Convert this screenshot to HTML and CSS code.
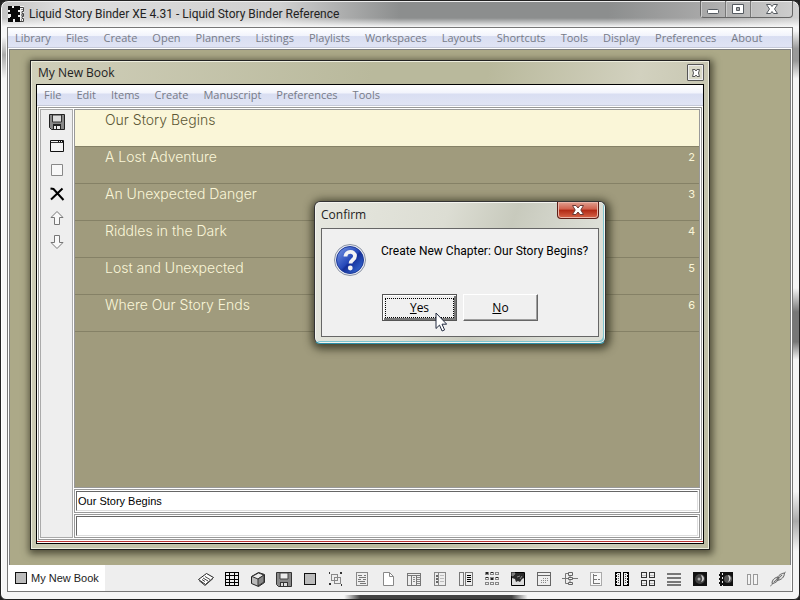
FILE: index.html
```html
<!DOCTYPE html>
<html lang="en">
<head>
<meta charset="utf-8">
<title>Liquid Story Binder XE 4.31</title>
<link rel="stylesheet" href="styles.css">
</head>
<body>
<div class="app">
  <header class="app-title">
    <svg class="icon" viewBox="0 0 16 16"><rect width="16" height="16" fill="#f2f2f2"/><path d="M0 0h4v2h2V0h6v4h-2v2h2v3h-2v2h2v5H7v-3H5v3H0v-4h2v-1h1V8H0V6h2V4H0z" fill="#0a0a0a"/><path d="M12 1.500h3.500v4H14v2h1.500v3H14v2h1.500v3H12" fill="none" stroke="#444"/><path d="M13 3h2v1h-2zM13 8h2v2h-2zM13 13h1v2h-1z" fill="#888"/></svg>
    <h1>Liquid Story Binder XE 4.31 - Liquid Story Binder Reference</h1>
    <div class="caption">
      <button aria-label="Minimize"><svg viewBox="0 0 16 16"><rect x="2.500" y="8.500" width="11" height="4" rx="1" fill="#fff" stroke="#555a60"/></svg></button>
      <button aria-label="Maximize"><svg viewBox="0 0 16 16"><path d="M2.500 3.500h11v9h-11z" fill="#fff" stroke="#555a60"/><path d="M6.500 6.500h3v3h-3z" fill="#aaa" stroke="#555a60"/></svg></button>
      <button class="wide" aria-label="Close"><svg viewBox="0 0 16 16"><path d="M2.500 3.500h4L8 5.500l1.500-2h4L10.500 8l3 4.500h-4l-1.500-2-1.500 2h-4L5.500 8z" fill="#fff" stroke="#555a60"/></svg></button>
    </div>
  </header>
  <div class="client">
    <nav class="menu">
      <a href="#">Library</a><a href="#">Files</a><a href="#">Create</a><a href="#">Open</a><a href="#">Planners</a><a href="#">Listings</a><a href="#">Playlists</a><a href="#">Workspaces</a><a href="#">Layouts</a><a href="#">Shortcuts</a><a href="#">Tools</a><a href="#">Display</a><a href="#">Preferences</a><a href="#">About</a>
    </nav>
    <main class="desktop">
      <section class="book">
        <header class="book-title">
          <h2>My New Book</h2>
          <button class="book-close" aria-label="Close book"><svg viewBox="0 0 10 10"><path d="M1.500 1.500h2.500L5 3l1-1.500h2.500L7.500 5l1 3.500H6L5 7 4 8.500H1.500l1-3.500z" fill="#fff" stroke="#555"/></svg></button>
        </header>
        <div class="book-body">
          <nav class="menu book-menu">
            <a href="#">File</a><a href="#">Edit</a><a href="#">Items</a><a href="#">Create</a><a href="#">Manuscript</a><a href="#">Preferences</a><a href="#">Tools</a>
          </nav>
          <div class="panes">
            <div class="tools">
              <button aria-label="Save"><svg class="icon" viewBox="0 0 16 16"><path d="M.500.500h15v15H2.500l-2-2z" fill="#888" stroke="#222"/><path d="M3.500 1h9v7h-9z" fill="#ddd" stroke="#333"/><path d="M4 10h8v6H4z" fill="#222"/><path d="M5 12h2v3H5zM8 12h3v3H8z" fill="#eee"/></svg></button>
              <button aria-label="Window"><svg class="icon" viewBox="0 0 16 16"><path d="M1.500 2.500h13v11h-13z" fill="#f4f4f4" stroke="#111"/><path d="M2 4.500h12" stroke="#333"/><path d="M9 3.500h5" stroke="#111" stroke-dasharray="1 1"/></svg></button>
              <button aria-label="Blank"><svg class="icon" viewBox="0 0 16 16"><path d="M2.500 2.500h11v11h-11z" fill="#f8f8f8" stroke="#888"/></svg></button>
              <button aria-label="Delete"><svg class="icon" viewBox="0 0 16 16"><path d="M1.500 2.500l3 .5 10 11M13.500 2.500L2 13.500" fill="none" stroke="#000" stroke-width="2"/></svg></button>
              <button aria-label="Move up"><svg class="icon" viewBox="0 0 16 16"><path d="M8 1.500l6 6h-3.500v7h-5v-7H2z" fill="#f8f8f8" stroke="#777"/></svg></button>
              <button aria-label="Move down"><svg class="icon" viewBox="0 0 16 16"><path d="M8 14.500l6-6h-3.500v-7h-5v7H2z" fill="#f8f8f8" stroke="#777"/></svg></button>
            </div>
            <div class="work">
              <ol class="chapters">
                <li class="current"><span>Our Story Begins</span></li>
                <li><span>A Lost Adventure</span><small>2</small></li>
                <li><span>An Unexpected Danger</span><small>3</small></li>
                <li><span>Riddles in the Dark</span><small>4</small></li>
                <li><span>Lost and Unexpected</span><small>5</small></li>
                <li><span>Where Our Story Ends</span><small>6</small></li>
              </ol>
              <div class="field"><input type="text" aria-label="Chapter title" value="Our Story Begins"></div>
              <div class="field"><input type="text" aria-label="Chapter note"></div>
            </div>
          </div>
        </div>
      </section>
      <section class="dialog" role="dialog" aria-labelledby="confirm-title">
        <header class="dialog-title">
          <h2 id="confirm-title">Confirm</h2>
          <button class="dialog-close" aria-label="Close dialog"><svg viewBox="0 0 14 12"><path d="M1.500 1.500h3.500L7 4l2-2.500h3.500L9.800 6l2.700 4.500H9L7 8l-2 2.500H1.500L4.200 6z" fill="#fff" stroke="#6b3a35"/></svg></button>
        </header>
        <div class="dialog-body">
          <svg class="question" viewBox="0 0 34 34"><defs><linearGradient id="ball" x1="0" y1="0" x2="1" y2="1"><stop offset="0" stop-color="#7c9be8"/><stop offset=".5" stop-color="#2548b8"/><stop offset=".55" stop-color="#142f98"/><stop offset="1" stop-color="#3f78e0"/></linearGradient></defs><circle cx="17" cy="17" r="15.500" fill="#e8ebf2" stroke="#8b93a5"/><circle cx="17" cy="17" r="13.500" fill="url(#ball)" stroke="#1d3a9a"/><path d="M12.500 13.500C12.500 7.500 22 7.500 22 13c0 4-4.500 4-4.500 7.500" fill="none" stroke="#f4f4f4" stroke-width="3.800"/><circle cx="17.300" cy="25" r="2.400" fill="#f4f4f4"/></svg>
          <p>Create New Chapter: Our Story Begins?</p>
          <div class="answers">
            <button class="answer default"><span><u>Y</u>es</span></button>
            <button class="answer"><span><u>N</u>o</span></button>
          </div>
        </div>
        <svg class="pointer" viewBox="0 0 12 20"><path d="M1 1v15.500l3.500-3.400 2.600 5.900 2.500-1.100L7 12.200h4.700z" fill="#fff" stroke="#222b40"/></svg>
      </section>
    </main>
    <footer class="taskbar">
      <button class="task"><i></i>My New Book</button>
      <div class="launch">
        <button aria-label="Notes"><svg class="icon" viewBox="0 0 16 16"><path d="M.500 8.500l8-6 7 4-8 7z" fill="#fff" stroke="#222"/><path d="M1 9.500l6 5 8-7M5 7l5 3M7 5.500l5 3M4 8.500l3 2" fill="none" stroke="#444"/></svg></button>
        <button aria-label="Grid"><svg class="icon crisp" viewBox="0 0 16 16"><path d="M2 2h12v12H2z" fill="#eee"/><path d="M1.500 1.500h13v13h-13zM5.500 1v14M10.500 1v14M1 4.500h14M1 8.500h14M1 11.500h14" fill="none" stroke="#000"/></svg></button>
        <button aria-label="Box"><svg class="icon" viewBox="0 0 16 16"><path d="M1.500 5.500l7-4 6 2v8l-6 4-7-3z" fill="#bbb" stroke="#222"/><path d="M2 5.500l6 2.500 6-4-5.500-2z" fill="#eee" stroke="#333"/><path d="M8 8v7l6-4V4z" fill="#888" stroke="#333"/></svg></button>
        <button aria-label="Save all"><svg class="icon" viewBox="0 0 16 16"><path d="M.500 1.500h15v14H2.500l-2-2z" fill="#888" stroke="#333"/><path d="M4 2h8v6H4z" fill="#eee" stroke="#444"/><path d="M4 11h8v5H4z" fill="#333"/><path d="M5 12h2v3H5zM8 12h3v3H8z" fill="#ddd"/></svg></button>
        <button aria-label="Panel"><svg class="icon crisp" viewBox="0 0 16 16"><path d="M2.500 2.500h11v11h-11z" fill="#bbb" stroke="#111"/></svg></button>
        <button aria-label="Group"><svg class="icon crisp" viewBox="0 0 16 16"><path d="M3.500 3.500h6v6h-6zM6.500 6.500h6v6h-6z" fill="none" stroke="#888"/><path d="M1 1h1v2H1zM12 1h2v2h-2zM1 12h2v2H1zM13 13h1v2h-1z" fill="#333"/></svg></button>
        <button aria-label="Document"><svg class="icon crisp" viewBox="0 0 16 16"><path d="M2.500 1.500h11v13h-11z" fill="#eee" stroke="#888"/><path d="M4 4.500h4m2 0h2M5 6.500h7M4 8.500h3m2 0h3M4 10.500h7M6 12.500h6" stroke="#777"/></svg></button>
        <button aria-label="New page"><svg class="icon" viewBox="0 0 16 16"><path d="M3.500 1.500h6l4 4v9h-10z" fill="#fff" stroke="#888"/><path d="M9.500 1.500v4h4" fill="none" stroke="#888"/></svg></button>
        <button aria-label="Outline"><svg class="icon crisp" viewBox="0 0 16 16"><path d="M1.500 2.500h13v12h-13zM1 4.500h14M5.500 5v9M10.500 5v9" fill="none" stroke="#777"/><path d="M7 6.500h2M7 8.500h2M7 10.500h2M11 6.500h3M11 8.500h3M11 10.500h3M11 12.500h3" stroke="#888"/></svg></button>
        <button aria-label="Dossier"><svg class="icon crisp" viewBox="0 0 16 16"><path d="M2.500 1.500h11v13h-11zM6.500 2v12" fill="#eee" stroke="#888"/><path d="M4 4h2v2H4zM4 7h2v2H4zM4 10h2v2H4z" fill="#666"/><path d="M8 4.500h4M8 7.500h4M8 10.500h4" stroke="#bbb"/></svg></button>
        <button aria-label="Compare"><svg class="icon crisp" viewBox="0 0 16 16"><path d="M1.500 1.500h4v13h-4zM7.500 1.500h7v13h-7z" fill="#eee" stroke="#777"/><path d="M9 4.500h4M9 6.500h4M9 8.500h4M9 10.500h4" stroke="#000"/></svg></button>
        <button aria-label="Storyboard"><svg class="icon crisp" viewBox="0 0 16 16"><path d="M1.500 1.500h3v2h-3zM6.500 1.500h3v2h-3zM11.500 1.500h3v2h-3zM1.500 6.500h3v2h-3zM6.500 6.500h3v2h-3zM11.500 6.500h3v2h-3zM1.500 11.500h3v2h-3zM6.500 11.500h3v2h-3zM11.500 11.500h3v2h-3z" fill="#eee" stroke="#888"/><path d="M2 1h2v2H2zM7 7h2v2H7zM12 6h2v1h-2zM2 6h2v1H2zM7 1h2v1H7z" fill="#222"/></svg></button>
        <button aria-label="Image"><svg class="icon" viewBox="0 0 16 16"><path d="M1.500 1.500h13v13h-13z" fill="#ddd" stroke="#000"/><path d="M2 2h12v5l-2 1-2 3-2-1-2 1-1-3-3-1z" fill="#2a2a2a"/><path d="M2 5l2-1 1-2H2zM7 6l3-1M10 8l2-3" fill="#777" stroke="#888"/></svg></button>
        <button aria-label="Calendar"><svg class="icon crisp" viewBox="0 0 16 16"><path d="M1.500 1.500h13v13h-13zM1 4.500h14" fill="#eee" stroke="#666"/><path d="M7 7.500h6M5 9.500h8M5 11.500h6" stroke="#888" stroke-dasharray="1 1"/></svg></button>
        <button aria-label="Mind map"><svg class="icon" viewBox="0 0 16 16"><path d="M0 7.500h16M8 4v9M6 2.500H3.500v10H6" stroke="#777" fill="none"/><path d="M6.500 1.500h4v3h-4zM6.500 6.500h4v2h-4zM6.500 11.500h4v2h-4z" fill="#eee" stroke="#666"/></svg></button>
        <button aria-label="Tree"><svg class="icon crisp" viewBox="0 0 16 16"><path d="M2.500 1.500h11v13h-11z" fill="#f8f8f8" stroke="#aaa"/><path d="M5.500 3v10M5 4.500h4M5 8.500h4M5 12.500h7M10 8.500h2" fill="none" stroke="#777"/></svg></button>
        <button aria-label="Columns"><svg class="icon crisp" viewBox="0 0 16 16"><path d="M1.500 1.500h5v13h-5zM9.500 1.500h5v13h-5z" fill="#eee" stroke="#000"/><path d="M2.500 1v14M13.500 1v14" stroke="#000" stroke-dasharray="2 1"/><path d="M4.500 3v10M11.500 3v10" stroke="#555" stroke-dasharray="1 1"/></svg></button>
        <button aria-label="Tiles"><svg class="icon crisp" viewBox="0 0 16 16"><path d="M1.500 1.500h5v5h-5zM9.500 1.500h5v5h-5zM1.500 9.500h5v5h-5zM9.500 9.500h5v5h-5z" fill="#eee" stroke="#333"/><path d="M2 4.500h4M10 4.500h4M2 12.500h4M10 12.500h4" stroke="#bbb"/></svg></button>
        <button aria-label="Rows"><svg class="icon crisp" viewBox="0 0 16 16"><path d="M1.500 2.500h13v1h-13zM1.500 6.500h13v1h-13zM1.500 10.500h13v1h-13zM1.500 13.500h13v1h-13z" fill="#ddd" stroke="#777"/></svg></button>
        <button aria-label="Audio"><svg class="icon" viewBox="0 0 16 16"><path d="M1 1h14v14H1z" fill="#111"/><circle cx="8" cy="8" r="5" fill="#444"/><path d="M9 4c4 1 4 6 0 7 2-3 1-4 0-7z" fill="#ccc"/><circle cx="7" cy="8" r="1.500" fill="#aaa"/></svg></button>
        <button aria-label="Video"><svg class="icon" viewBox="0 0 16 16"><path d="M1 1h14v14H1z" fill="#111"/><path d="M1.500 1v14M4.500 2v13" stroke="#eee" stroke-dasharray="2 2"/><circle cx="10" cy="8" r="4" fill="#555"/><path d="M10 4c4 1 3 6 0 7 2-3 1-4 0-7z" fill="#ddd"/></svg></button>
        <button aria-label="Split"><svg class="icon crisp" viewBox="0 0 16 16"><path d="M3.500 3.500h3v10h-3zM9.500 3.500h4v10h-4z" fill="#f4f4f4" stroke="#999"/></svg></button>
        <button aria-label="Link"><svg class="icon" viewBox="0 0 16 16"><path d="M0 15.500l4-4M16 .500l-4 4" stroke="#777"/><path d="M2 12.500c0-4 3-6 6-6.500l1 1c-1 3-3 5-7 5.500zM7 9.500c0-4 3-7 7.500-7.500 0 4-3 7-7.500 7.500zM4 11l8-7" fill="#ddd" stroke="#666"/></svg></button>
      </div>
    </footer>
  </div>
</div>
</body>
</html>
```
FILE: styles.css
```css
* { box-sizing: border-box; }
body {
  margin: 0;
  background: #222;
  font-family: "Open Sans", "Noto Sans", sans-serif;
  font-size: 11px;
  line-height: 16px;
  color: #222;
}
h1, h2, p, ol { margin: 0; padding: 0; font: inherit; list-style: none; }
button { margin: 0; padding: 0; border: 0; background: none; font: inherit; color: inherit; }
svg { display: block; }
.icon { width: 16px; height: 16px; flex: none; }
.crisp { shape-rendering: crispEdges; }

.app {
  min-height: 100vh;
  display: flex;
  flex-direction: column;
  padding: 0 6px 7px;
  border: 1px solid #222;
  border-radius: 8px 8px 6px 6px;
  background:
    linear-gradient(90deg, #fff0 43%, #444 45%, #444 64%, #fff0 66%) bottom / 100% 4px no-repeat,
    linear-gradient(180deg, #fff0, #fff0 17px, #f8f8f8 26px) top / 100% 27px no-repeat,
    linear-gradient(90deg, #c4c4c4, #dedede 8%, #d0d0d0 35%, #8c8e8e 50%, #8c8e8e 76%, #a8a8a8 88%, #d0d0d0) top / 100% 27px no-repeat,
    linear-gradient(180deg, #fff0 5%, #999 8%, #999 10%, #fff0 13%, #fff0 48%, #777 52%, #777 57%, #fff0 60%, #fff0 82%, #aaa 87%, #fff0 92%) right / 6px 100% no-repeat,
    linear-gradient(180deg, #fff0 6%, #aaa 9%, #fff0 13%) left / 5px 100% no-repeat,
    #f6f6f6;
  box-shadow: inset 0 1px #eee, inset 1px 0 #fff;
}
.app-title { height: 26px; display: flex; align-items: center; gap: 5px; padding-left: 1px; }
.app-title h1, .dialog-body p { font-family: Roboto, "Open Sans", sans-serif; font-size: 12px; }
.app-title h1 { flex: 1; }
.caption {
  display: flex;
  align-self: flex-start;
  height: 17px;
  border: 1px solid #666;
  border-top: 0;
  border-radius: 0 0 4px 4px;
}
.caption button { width: 25px; display: flex; justify-content: center; border-right: 1px solid #777; box-shadow: inset 1px 0 #ccc; }
.caption .wide { width: 41px; border-right: 0; }
.caption svg { width: 16px; height: 16px; }

.client { flex: 1; display: flex; flex-direction: column; border: 1px solid #777; background: #fff; }
.menu {
  display: flex;
  align-items: center;
  gap: 15px;
  height: 20px;
  padding: 0 7px;
  background: linear-gradient(#fff, #f2f4fc 40%, #d9def2 45%, #e0e4f4);
  border-bottom: 1px solid #c4c8d8;
  white-space: nowrap;
}
.menu a { color: #777b88; text-decoration: none; font-size: 11px; }
.desktop {
  flex: 1;
  position: relative;
  margin: 1px 1px 0;
  border: 1px solid #808080;
  border-bottom: 0;
  background: #aca988;
}
.book {
  position: absolute;
  left: 20px;
  right: 80px;
  top: 10px;
  bottom: 15px;
  display: flex;
  flex-direction: column;
  padding: 0 5px 5px;
  border: 1px solid #222;
  background: linear-gradient(100deg, #d0cfba, #b9b99c 45%, #b9b99c 60%, #d2d1bf 80%, #bcbba2);
  box-shadow: inset 0 0 0 1px #eeeede, 1px 2px 7px 2px #3b3a28cc;
}
.book-title { height: 23px; display: flex; align-items: center; justify-content: space-between; padding: 0 0 0 2px; }
.book-title h2 { font-size: 12px; }
.book-close { width: 17px; height: 17px; display: grid; place-items: center; border: 1px solid #555; border-radius: 1px; background: #d9d9c8; box-shadow: inset 0 0 0 1px #eee; }
.book-close svg { width: 10px; height: 10px; }
.book-body { flex: 1; display: flex; flex-direction: column; border: 1px solid #000; background: #fff; box-shadow: inset 0 -1px #fff, inset 0 -2px #b33; }
.book-menu { height: 21px; }
.panes { flex: 1; display: flex; gap: 1px; margin: 1px 1px 3px; padding: 1px; border: 1px solid #999; }
.tools {
  width: 33px;
  display: flex;
  flex-direction: column;
  align-items: center;
  gap: 8px;
  padding-top: 4px;
  border: 1px solid #aaa;
  background: #eee;
}
.work { flex: 1; display: flex; flex-direction: column; gap: 1px; }
.chapters { flex: 1; border: 1px solid #999; background: #a09b7d; font-family: Inter, "Open Sans", sans-serif; font-size: 14px; font-weight: 300; }
.chapters li { display: flex; justify-content: space-between; height: 37px; padding: 0 4px 0 30px; line-height: 20px; color: #faf6d8; border-bottom: 1px solid #858166; }
.chapters .current { background: #faf6d8; color: #5c5835; }
.chapters small { font-size: 11px; font-weight: 400; line-height: 20px; }
.field { padding: 1px; border: 1px solid #999; }
.field input {
  display: block;
  width: 100%;
  height: 20px;
  padding: 0 1px;
  border: 1px solid #ddd;
  border-top: 1px solid #666;
  border-left: 1px solid #666;
  font-family: "Liberation Sans", Arial, sans-serif;
  font-size: 11px;
  color: #000;
  outline: 0;
}

.dialog {
  position: absolute;
  left: 304px;
  top: 151px;
  width: 292px;
  padding: 0 6px 6px;
  border: 1px solid #333;
  border-bottom-color: #2b8fa8;
  border-radius: 6px;
  background: linear-gradient(110deg, #e6e7df, #dcddd3 40%, #c8cabd 60%, #dcded6 85%);
  box-shadow: inset 0 0 0 1px #f4f4ef, inset -2px -2px #7fc4cf, 1px 2px 9px 3px #2a2a1acc;
}
.dialog-title { height: 26px; display: flex; align-items: center; justify-content: space-between; }
.dialog-title h2 { font-size: 12px; }
.dialog-close { align-self: flex-start; width: 42px; height: 17px; display: grid; place-items: center; border: 1px solid #5c1f18; border-top: 0; border-radius: 0 0 4px 4px; background: linear-gradient(#e0a090, #d0604c 45%, #b02814 50%, #d8664a); box-shadow: inset 0 0 0 1px #eab5a8; }
.dialog-close svg { width: 14px; height: 12px; }
.dialog-body {
  display: grid;
  grid-template-columns: 34px 1fr;
  column-gap: 14px;
  row-gap: 17px;
  padding: 14px 0 15px 11px;
  border: 1px solid #666;
  background: #f0f0f0;
}
.question { width: 34px; height: 34px; }
.dialog-body p { color: #000; white-space: nowrap; }
.answers { grid-column: 2; display: flex; gap: 6px; padding-left: 1px; }
.answer { width: 75px; height: 27px; padding: 3px; border: 1px solid #fff; border-right-color: #666; border-bottom-color: #666; background: #f0f0f0; box-shadow: inset -1px -1px #a0a0a0; color: #000; font-size: 12px; }
.answer.default { border: 1px solid #555; box-shadow: inset 1px 1px #fff, inset -2px -2px #777; }
.answer span { display: block; line-height: 18px; }
.default span { outline: 1px dotted #000; }
.pointer { position: absolute; left: 120px; top: 110px; width: 12px; height: 20px; }

.taskbar { display: flex; justify-content: space-between; align-items: center; height: 26px; margin-right: 1px; background: #eee; }
.task { display: flex; align-items: center; gap: 4px; align-self: stretch; padding: 0 6px 0 7px; background: #fff; font-family: "Liberation Sans", Arial, sans-serif; font-size: 11px; }
.task i { width: 12px; height: 12px; border: 1px solid #111; background: #bbb; }
.launch { display: flex; gap: 10px; padding: 1px 5px 0 0; }
```
